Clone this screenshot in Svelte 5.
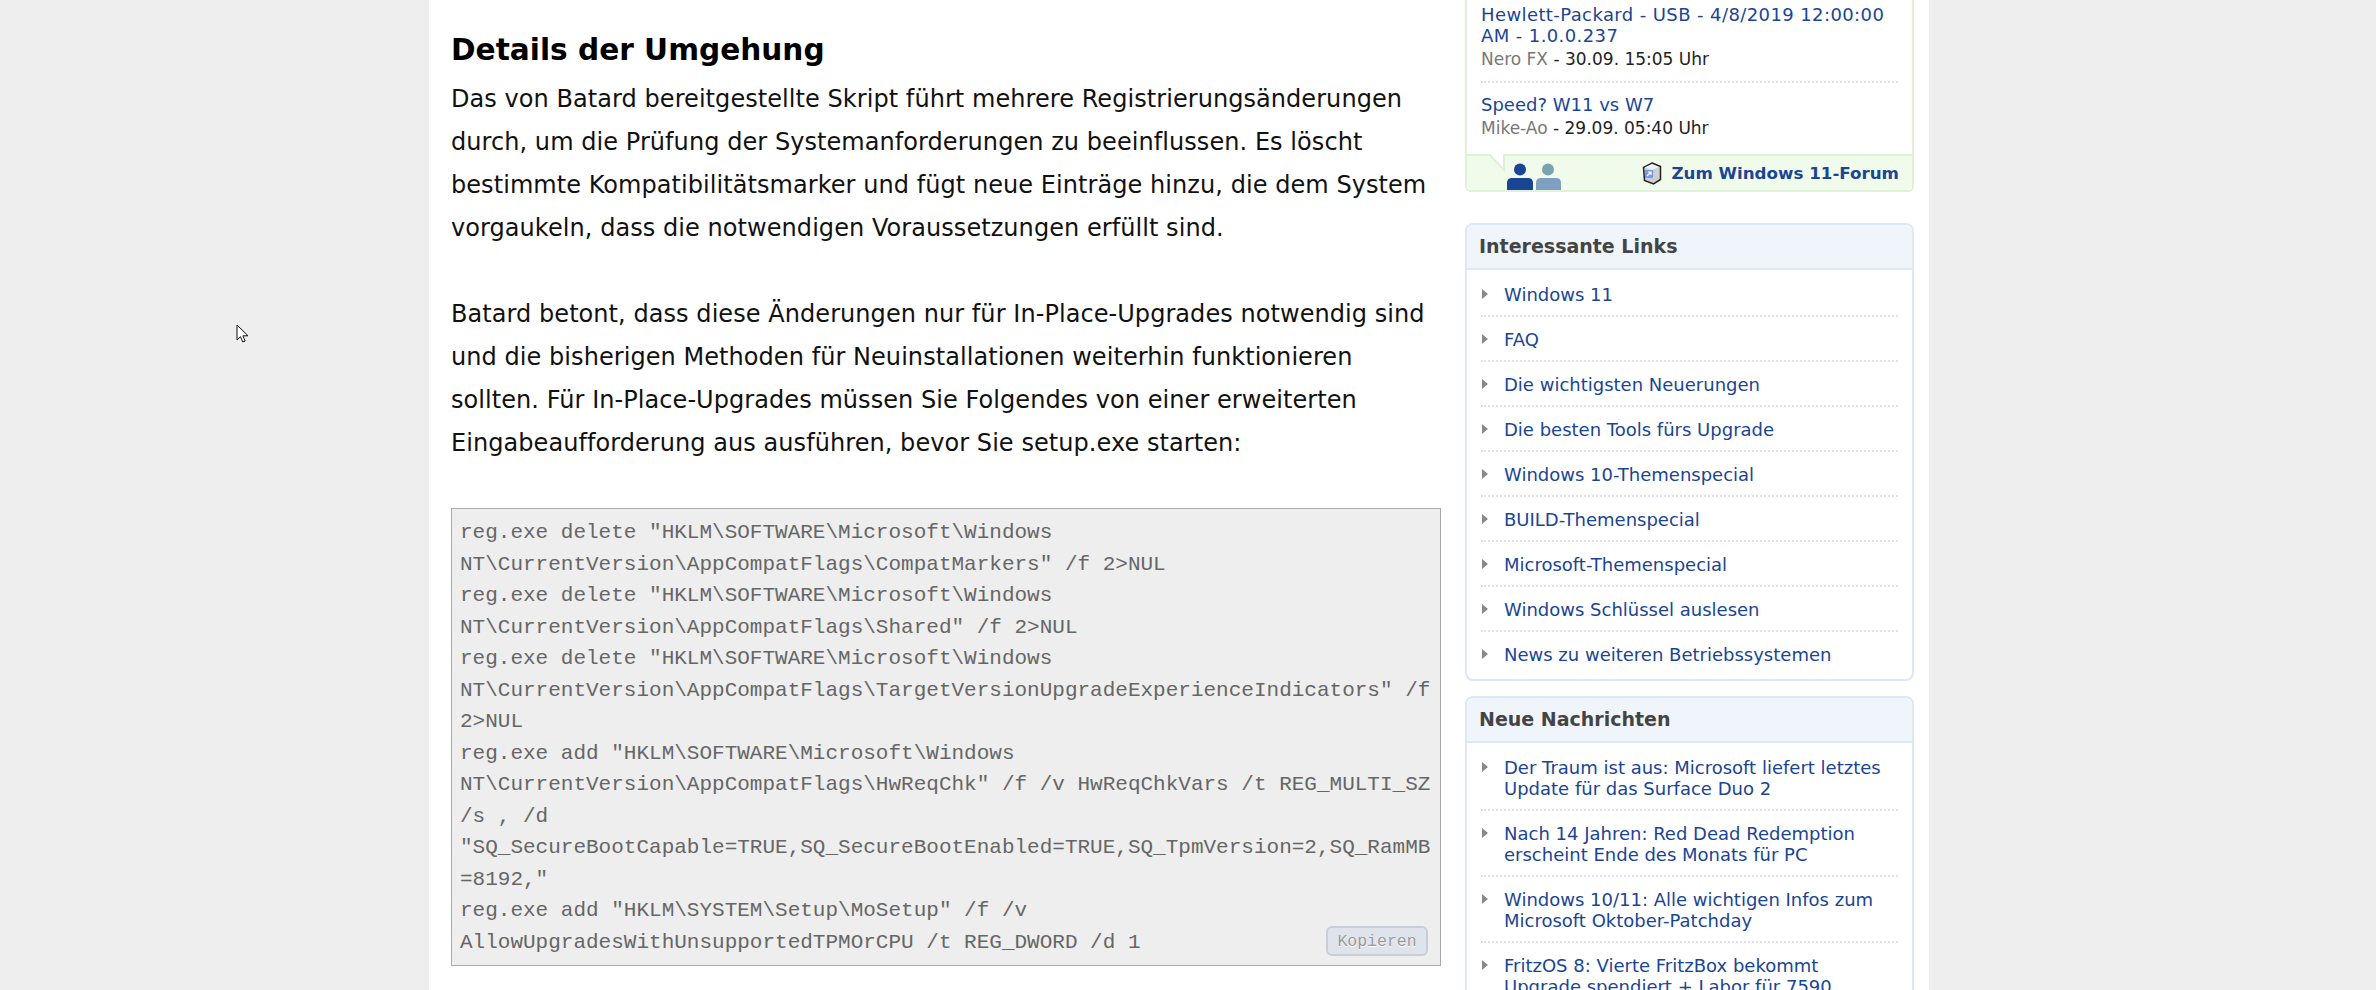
<script>
	const code = `reg.exe delete "HKLM\\SOFTWARE\\Microsoft\\Windows NT\\CurrentVersion\\AppCompatFlags\\CompatMarkers" /f 2>NUL
reg.exe delete "HKLM\\SOFTWARE\\Microsoft\\Windows NT\\CurrentVersion\\AppCompatFlags\\Shared" /f 2>NUL
reg.exe delete "HKLM\\SOFTWARE\\Microsoft\\Windows NT\\CurrentVersion\\AppCompatFlags\\TargetVersionUpgradeExperienceIndicators" /f 2>NUL
reg.exe add "HKLM\\SOFTWARE\\Microsoft\\Windows NT\\CurrentVersion\\AppCompatFlags\\HwReqChk" /f /v HwReqChkVars /t REG_MULTI_SZ /s , /d "SQ_SecureBootCapable=TRUE,SQ_SecureBootEnabled=TRUE,SQ_TpmVersion=2,SQ_RamMB=8192,"
reg.exe add "HKLM\\SYSTEM\\Setup\\MoSetup" /f /v AllowUpgradesWithUnsupportedTPMOrCPU /t REG_DWORD /d 1`;

	const threads = [
		{ title: "Hewlett-Packard - USB - 4/8/2019 12:00:00 AM - 1.0.0.237", user: "Nero FX", date: "30.09. 15:05 Uhr", wide: true },
		{ title: "Speed? W11 vs W7", user: "Mike-Ao", date: "29.09. 05:40 Uhr", wide: false }
	];

	const links = [
		"Windows 11",
		"FAQ",
		"Die wichtigsten Neuerungen",
		"Die besten Tools fürs Upgrade",
		"Windows 10-Themenspecial",
		"BUILD-Themenspecial",
		"Microsoft-Themenspecial",
		"Windows Schlüssel auslesen",
		"News zu weiteren Betriebssystemen"
	];

	const news = [
		"Der Traum ist aus: Microsoft liefert letztes Update für das Surface Duo 2",
		"Nach 14 Jahren: Red Dead Redemption erscheint Ende des Monats für PC",
		"Windows 10/11: Alle wichtigen Infos zum Microsoft Oktober-Patchday",
		"FritzOS 8: Vierte FritzBox bekommt Upgrade spendiert + Labor für 7590"
	];
</script>

<div class="viewport">
	<svg class="cursor" width="14" height="20" viewBox="0 0 14 20">
		<path d="M1 1v15l3.500-3.300 2.300 5.300 2.400-1-2.300-5.200H12z" fill="#fff" stroke="#111" stroke-width="1" />
	</svg>

	<div class="page">
		<main>
			<h2>Details der Umgehung</h2>
			<p>Das von Batard bereitgestellte Skript führt mehrere Registrierungsänderungen durch, um die Prüfung der Systemanforderungen zu beeinflussen. Es löscht bestimmte Kompatibilitätsmarker und fügt neue Einträge hinzu, die dem System vorgaukeln, dass die notwendigen Voraussetzungen erfüllt sind.</p>
			<p>Batard betont, dass diese Änderungen nur für In-Place-Upgrades notwendig sind und die bisherigen Methoden für Neuinstallationen weiterhin funktionieren sollten. Für In-Place-Upgrades müssen Sie Folgendes von einer erweiterten Eingabeaufforderung aus ausführen, bevor Sie setup.exe starten:</p>
			<div class="code">
				<pre>{code}</pre>
				<button>Kopieren</button>
			</div>
		</main>

		<aside>
			<section class="forum">
				{#each threads as t}
					<div class="thread">
						<a href="#top" class:wide={t.wide}>{t.title}</a>
						<div class="meta"><span>{t.user}</span> - {t.date}</div>
					</div>
				{/each}
				<footer>
					<svg class="notch" width="18" height="18" viewBox="0 0 18 18">
						<path d="M1 0l15 16v-16z" fill="#fff" />
						<path d="M1 0l15 16v-16" fill="none" stroke="#dff2d8" stroke-width="2" />
					</svg>
					<svg class="people" width="56" height="27" viewBox="0 0 56 27">
						<circle cx="14" cy="6.500" r="6" fill="#1a4594" />
						<path d="M1 27v-7q0-5 5-5h16q5 0 5 5v7z" fill="#1a4594" />
						<circle cx="42" cy="6.500" r="6" fill="#7ba3ad" />
						<path d="M30 27v-7q0-5 5-5h15q5 0 5 5v7z" fill="#7f9fc0" />
					</svg>
					<svg class="cube" width="20" height="23" viewBox="0 0 20 23">
						<path d="M10 1l8.500 3.500v13l-7 4.500-9-3.500-1-13z" fill="#cfcfcf" stroke="#222" stroke-width="1.500" />
						<path d="M2.500 5.500l7.500-3.500 7 3-7 3z" fill="#f2f2f2" />
						<rect x="3" y="8" width="8" height="8" fill="#6f9bf5" />
						<path d="M5 14l4-4M6 10h3v3" fill="none" stroke="#fff" stroke-width="1.200" />
					</svg>
					<a href="#top">Zum Windows 11-Forum</a>
				</footer>
			</section>

			<section class="box">
				<h3>Interessante Links</h3>
				<ul>
					{#each links as l}
						<li><a href="#top">{l}</a></li>
					{/each}
				</ul>
			</section>

			<section class="box">
				<h3>Neue Nachrichten</h3>
				<ul>
					{#each news as n}
						<li><a href="#top">{n}</a></li>
					{/each}
				</ul>
			</section>
		</aside>
	</div>
</div>

<style>
	:global(body) {
		background: #eeeeee;
	}
	.viewport {
		position: relative;
		height: 990px;
		overflow: hidden;
		font-family: "DejaVu Sans", Verdana, sans-serif;
	}
	.cursor {
		position: absolute;
		left: 236px;
		top: 324px;
	}
	.page {
		width: 1500px;
		height: 990px;
		margin-left: 429px;
		background: #fff;
		display: flex;
		padding: 0 16px 0 22px;
		box-sizing: border-box;
		overflow: hidden;
	}
	main {
		width: 990px;
		flex: none;
	}
	h2 {
		margin: 32px 0 0;
		font-size: 29.600px;
		line-height: 36px;
		font-weight: bold;
		color: #000;
	}
	p {
		margin: 0 0 43px;
		font-size: 24px;
		letter-spacing: 0.06px;
		line-height: 43px;
		color: #111;
	}
	h2 + p {
		margin-top: 10px;
	}
	.code {
		position: relative;
		box-sizing: border-box;
		height: 458px;
		margin-top: 40px;
		padding: 8px;
		border: 1.500px solid #aaa;
		background: #eeeeee;
	}
	pre {
		margin: 0;
		font-family: "Liberation Mono", "Courier New", monospace;
		font-size: 21px;
		line-height: 31.500px;
		color: #666;
		white-space: pre-wrap;
		overflow-wrap: anywhere;
	}
	button {
		position: absolute;
		right: 12px;
		bottom: 9px;
		width: 102px;
		height: 30px;
		padding: 0;
		border: 2px solid #c9ced6;
		border-radius: 6px;
		background: #dfe4ec;
		font-family: "Liberation Mono", "Courier New", monospace;
		font-size: 16.500px;
		color: #9a9a9a;
		text-shadow: 0 1px 0 #fff;
	}
	aside {
		width: 449px;
		margin-left: 24px;
		flex: none;
	}
	a {
		color: #1a4594;
		text-decoration: none;
	}
	.wide {
		letter-spacing: 0.4px;
	}
	.forum {
		border: 2px solid #dff2d8;
		border-top: 0;
		border-radius: 0 0 6px 6px;
		margin-bottom: 31px;
		font-size: 18px;
		line-height: 21px;
	}
	.thread {
		margin: 0 14px;
		padding: 4px 0 11px;
		border-bottom: 2px dotted #dde3ea;
	}
	.thread + .thread {
		padding: 11px 0 15px;
		border-bottom: 0;
	}
	.meta {
		margin-top: 3px;
		font-size: 17px;
		color: #222;
	}
	.meta span {
		color: #777;
	}
	footer {
		position: relative;
		height: 34px;
		background: #f0fbec;
		border-top: 2px solid #dff2d8;
		border-radius: 0 0 6px 6px;
		display: flex;
		align-items: center;
		justify-content: flex-end;
		padding-right: 13px;
		gap: 9px;
		font-size: 16.700px;
		font-weight: bold;
	}
	.notch {
		position: absolute;
		left: 21px;
		top: -2px;
	}
	.people {
		position: absolute;
		left: 39px;
		bottom: 0;
	}
	.box {
		margin-bottom: 15px;
		border: 2px solid #dde8f5;
		border-radius: 8px;
		font-size: 18px;
		line-height: 21px;
	}
	h3 {
		margin: 0;
		height: 43px;
		padding-left: 12px;
		background: #f0f5fc;
		border-bottom: 2px solid #dde8f5;
		border-radius: 6px 6px 0 0;
		font-size: 19px;
		line-height: 42px;
		color: #444;
	}
	ul {
		list-style: none;
		margin: 0;
		padding: 2px 14px 4px;
	}
	li {
		position: relative;
		padding: 12px 0 10px 23px;
		border-bottom: 2px dotted #dde3ea;
	}
	li:last-child {
		border-bottom: 0;
	}
	li::before {
		content: "";
		position: absolute;
		left: 1px;
		top: 17px;
		border-style: solid;
		border-width: 5.500px 0 5.500px 6.500px;
		border-color: transparent transparent transparent #888;
	}
</style>
